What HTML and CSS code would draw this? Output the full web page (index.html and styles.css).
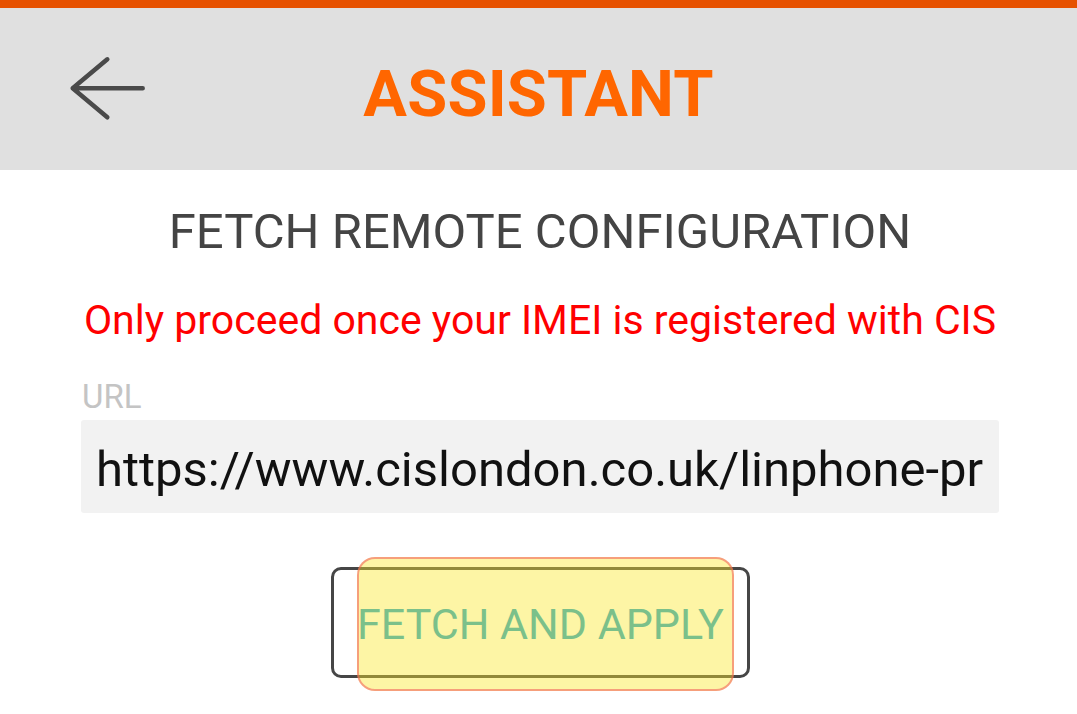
FILE: index.html
```html
<!DOCTYPE html>
<html lang="en">
<head>
    <meta charset="UTF-8">
    <meta name="viewport" content="width=device-width, initial-scale=1.0">
    <title>Assistant</title>
    <link rel="stylesheet" href="styles.css">
</head>
<body>
    <div class="top-bar">
        <div class="back">
            <svg width="80" height="70" viewBox="0 0 80 70">
                <path d="M74.7 34.3H4.7M39.3 5.3L4.7 34.3L39.3 63.3" fill="none" stroke="#4a4a4a" stroke-width="4.5" stroke-linecap="round" stroke-linejoin="round"/>
            </svg>
        </div>
        <h1 class="title">ASSISTANT</h1>
        <div></div>
    </div>

    <div class="content">
        <h2 class="heading">FETCH REMOTE CONFIGURATION</h2>
        <p class="warning">Only proceed once your IMEI is registered with CIS</p>

        <div class="field">
            <label class="field-label" for="url">URL</label>
            <div class="field-input" id="url">https://www.cislondon.co.uk/linphone-pr</div>
        </div>

        <div class="actions">
            <button class="fetch-button">
                <span class="fetch-highlight"></span>
                <span class="fetch-text">FETCH AND APPLY</span>
            </button>
        </div>
    </div>
</body>
</html>
```

FILE: styles.css
```css
* {
    margin: 0;
    padding: 0;
    box-sizing: border-box;
    font-family: Roboto, 'Noto Sans', sans-serif;
}

body {
    background: white;
    width: 1077px;
    height: 714px;
    overflow: hidden;
}

.top-bar {
    border-top: 8px solid #e65100;
    background: #e0e0e0;
    height: 170px;
    display: grid;
    grid-template-columns: 1fr auto 1fr;
    align-items: center;
}

.back {
    padding-left: 68px;
    display: flex;
    align-items: center;
}

.back svg {
    display: block;
}

.title {
    color: #ff6600;
    font-size: 65px;
    font-weight: 700;
    line-height: 76px;
    padding-top: 10px;
    letter-spacing: 0.2px;
}

.content {
    padding: 33px 78px 0 81px;
    display: flex;
    flex-direction: column;
}

.heading {
    text-align: center;
    color: #444444;
    font-size: 49px;
    font-weight: 400;
    line-height: 58px;
}

.warning {
    text-align: center;
    color: #ff0000;
    font-size: 41px;
    line-height: 48px;
    margin-top: 35px;
}

.field {
    margin-top: 33px;
    display: flex;
    flex-direction: column;
}

.field-label {
    color: #c4c4c4;
    font-size: 33px;
    line-height: 40px;
    padding-left: 1px;
}

.field-input {
    margin-top: 3px;
    height: 93px;
    width: 918px;
    background: #f2f2f2;
    border-radius: 3px;
    padding: 6px 0 0 15px;
    display: flex;
    align-items: center;
    font-size: 49px;
    color: #111111;
    white-space: nowrap;
    overflow: hidden;
}

.actions {
    margin-top: 54px;
    display: flex;
    justify-content: center;
    padding-left: 1px;
}

.fetch-button {
    position: relative;
    width: 419px;
    height: 111px;
    background: white;
    border: 3px solid #464646;
    border-radius: 10px;
    display: flex;
    align-items: center;
    justify-content: center;
    padding-top: 2px;
}

.fetch-highlight {
    position: absolute;
    left: 23px;
    right: 13px;
    top: -13px;
    bottom: -16px;
    background: rgba(250, 230, 40, 0.42);
    border: 2px solid rgba(240, 90, 90, 0.55);
    border-radius: 18px;
}

.fetch-text {
    position: relative;
    color: #7bc08a;
    font-size: 43px;
    line-height: 52px;
}
```
